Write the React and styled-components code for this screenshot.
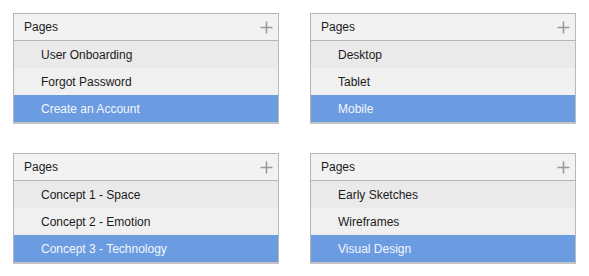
import React from "react";
import styled, { createGlobalStyle } from "styled-components";

const Global = createGlobalStyle`
  html, body { margin: 0; padding: 0; background: #ffffff; }
  body { font-family: "Liberation Sans", Arial, sans-serif; }
`;

const Grid = styled.div`
  display: grid;
  grid-template-columns: 266px 266px;
  column-gap: 31px;
  row-gap: 29px;
  padding: 13px 0 0 13px;
`;

const Panel = styled.div`
  border: 1px solid #b4b4b4;
  border-bottom-width: 2px;
  border-right-color: #b9b9b9;
  border-bottom-color: #c4c4c4;
  background: #f0f0f0;
  display: flex;
  flex-direction: column;
`;

const Header = styled.div`
  height: 26px;
  display: flex;
  align-items: center;
  justify-content: space-between;
  padding: 0 5px 0 10px;
  background: #f2f2f2;
  border-bottom: 1px solid #b4b4b4;
  font-size: 12px;
  color: #1b1b1b;
`;

const Row = styled.div`
  height: 27px;
  display: flex;
  align-items: center;
  padding-left: 27px;
  font-size: 12px;
  color: ${(p) => (p.$selected ? "#f3f6fc" : "#1b1b1b")};
  background: ${(p) => (p.$selected ? "#6b9ce1" : p.$alt ? "#eaeaea" : "#f0f0f0")};
`;

const Plus = () => (
  <svg width="13" height="13" viewBox="0 0 13 13">
    <path d="M6.5 0.5v12M0.5 6.5h12" stroke="#9a9a9a" strokeWidth="1.6" />
  </svg>
);

const panels = [
  ["User Onboarding", "Forgot Password", "Create an Account"],
  ["Desktop", "Tablet", "Mobile"],
  ["Concept 1 - Space", "Concept 2 - Emotion", "Concept 3 - Technology"],
  ["Early Sketches", "Wireframes", "Visual Design"],
];

export default function App() {
  return (
    <>
      <Global />
      <Grid>
        {panels.map((items, i) => (
          <Panel key={i}>
            <Header>
              <span>Pages</span>
              <Plus />
            </Header>
            {items.map((t, j) => (
              <Row key={t} $alt={j === 0} $selected={j === 2}>
                {t}
              </Row>
            ))}
          </Panel>
        ))}
      </Grid>
    </>
  );
}
